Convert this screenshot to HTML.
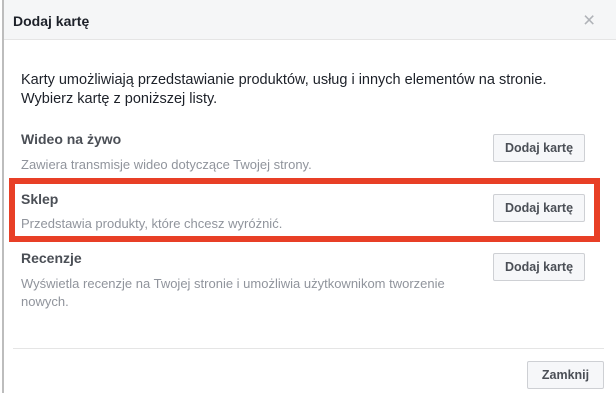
<!DOCTYPE html>
<html><head><meta charset="utf-8"><style>
*{margin:0;padding:0;box-sizing:border-box}
body{width:616px;height:400px;background:#fff;font-family:"Liberation Sans",Helvetica,Arial,sans-serif;position:relative;overflow:hidden;color:#1d2129}
.a{position:absolute;white-space:nowrap}
.lb{position:absolute;left:2px;top:0;width:2px;height:393px;background:#bdbdbd}
.hd{position:absolute;left:4px;top:0;width:612px;height:40px;background:#f5f6f7;border-bottom:1px solid #e5e5e5}
.t{font-size:14px;font-weight:bold;color:#4b4f56}
.d{font-size:13px;color:#90949c}
.btn{position:absolute;background:#f6f7f9;border:1px solid #ced0d4;border-radius:2px;font-size:12.5px;font-weight:bold;color:#4b4f56;text-align:center;line-height:26px}
.red{position:absolute;left:9px;top:178px;width:591px;height:64px;border:6px solid #e83f26}
</style></head><body>
<div class="lb"></div>
<div class="hd"></div>
<div class="a" style="left:13px;top:13px;font-size:14px;font-weight:bold;color:#1d2129">Dodaj kartę</div>
<div class="a" style="left:583px;top:9px;font-size:21px;color:#b0b3b8">×</div>
<div class="a" style="left:21px;top:71px;font-size:14.5px;line-height:19px;color:#1d2129">Karty umożliwiają przedstawianie produktów, usług i innych elementów na stronie.<br>Wybierz kartę z poniższej listy.</div>

<div class="a t" style="left:21px;top:131px">Wideo na żywo</div>
<div class="a d" style="left:21px;top:157px">Zawiera transmisje wideo dotyczące Twojej strony.</div>
<div class="btn" style="left:493px;top:134px;width:92px;height:28px">Dodaj kartę</div>

<div class="red"></div>
<div class="a t" style="left:21px;top:191px">Sklep</div>
<div class="a d" style="left:21px;top:216px">Przedstawia produkty, które chcesz wyróżnić.</div>
<div class="btn" style="left:493px;top:194px;width:92px;height:28px">Dodaj kartę</div>

<div class="a t" style="left:21px;top:250px">Recenzje</div>
<div class="a d" style="left:21px;top:275px;line-height:18px">Wyświetla recenzje na Twojej stronie i umożliwia użytkownikom tworzenie<br>nowych.</div>
<div class="btn" style="left:493px;top:253px;width:92px;height:28px">Dodaj kartę</div>

<div class="a" style="left:13px;top:348px;width:591px;height:1px;background:#e5e5e5"></div>
<div class="btn" style="left:527px;top:361px;width:77px;height:28px">Zamknij</div>
</body></html>
